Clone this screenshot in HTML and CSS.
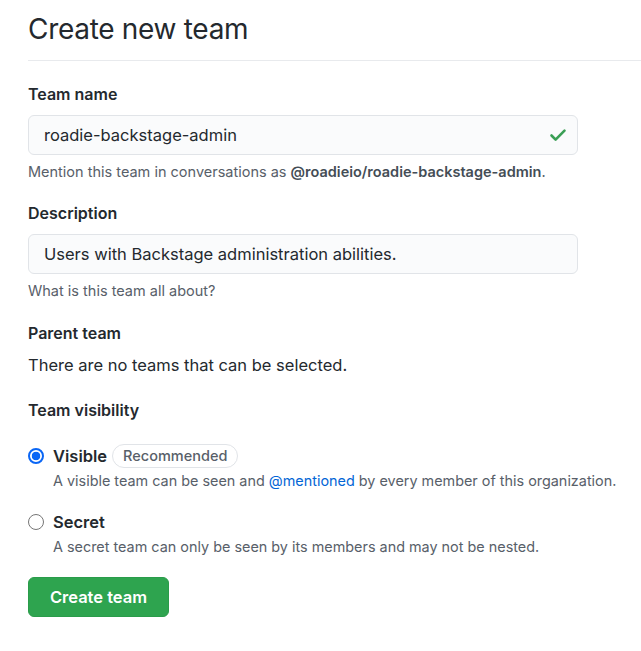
FILE: index.html
```html
<!DOCTYPE html>
<html>
<head>
<meta charset="utf-8">
<link rel="stylesheet" href="styles.css">
</head>
<body>
<div class="page">
  <h1 class="title">Create new team</h1>
  <div class="group">
    <label class="label">Team name</label>
    <div class="input has-check">
      <span class="value">roadie-backstage-admin</span>
      <svg class="check" width="20" height="20" viewBox="0 0 20 20"><path d="M3.5 10.5 L7.6 14.6 L16.5 5.7" fill="none" stroke="#3a9f55" stroke-width="2.6" stroke-linecap="round" stroke-linejoin="round"/></svg>
    </div>
    <p class="note">Mention this team in conversations as <strong>@roadieio/roadie-backstage-admin</strong>.</p>
  </div>
  <div class="group group-tight">
    <label class="label">Description</label>
    <div class="input"><span class="value">Users with Backstage administration abilities.</span></div>
    <p class="note">What is this team all about?</p>
  </div>
  <div class="group">
    <label class="label">Parent team</label>
    <p class="plain">There are no teams that can be selected.</p>
  </div>
  <div class="group">
    <label class="label">Team visibility</label>
    <div class="options">
      <div class="option">
        <span class="radio checked"></span>
        <div class="opt-body">
          <div class="opt-title">Visible <span class="badge">Recommended</span></div>
          <p class="opt-note">A visible team can be seen and <a class="link">@mentioned</a> by every member of this organization.</p>
        </div>
      </div>
      <div class="option">
        <span class="radio"></span>
        <div class="opt-body">
          <div class="opt-title">Secret</div>
          <p class="opt-note">A secret team can only be seen by its members and may not be nested.</p>
        </div>
      </div>
    </div>
  </div>
  <button class="btn">Create team</button>
</div>
</body>
</html>
```
FILE: styles.css
```css
* { box-sizing: border-box; }
body {
  margin: 0;
  background: #fff;
  font-family: Inter, "Liberation Sans", sans-serif;
  color: #24292e;
}
.page {
  padding: 11px 0 0 28px;
}
.title {
  margin: 0;
  font-size: 28px;
  font-weight: 400;
  line-height: 36px;
  padding-bottom: 13px;
  border-bottom: 1px solid #e8eaed;
  letter-spacing: -0.3px;
}
.group { margin-top: 22px; }
.group-tight { margin-top: 21px; }
.label {
  display: block;
  font-size: 16px;
  font-weight: 600;
  line-height: 22px;
  margin-bottom: 10px;
}
.input {
  width: 550px;
  height: 40px;
  background: #fafbfc;
  border: 1px solid #e1e4e8;
  border-radius: 6px;
  display: flex;
  align-items: center;
  padding: 0 15px;
  font-size: 16.5px;
}
.has-check { justify-content: space-between; padding-right: 9px; }
.note {
  margin: 7px 0 0;
  font-size: 14.5px;
  line-height: 19px;
  color: #586069;
}
.note strong { color: #444d56; font-weight: 600; }
.plain { margin: 0; font-size: 16.5px; line-height: 23px; }
.options { margin-top: 23px; display: flex; flex-direction: column; gap: 20px; }
.option { display: flex; gap: 9px; }
.radio {
  width: 16px; height: 16px;
  border: 1px solid #767676;
  border-radius: 50%;
  margin-top: 4px;
  flex: none;
  background: #fff;
}
.radio.checked {
  border: 2px solid #0a66f5;
  background: radial-gradient(circle, #0a66f5 0 4px, #fff 4.6px);
}
.opt-title {
  font-size: 16.5px; font-weight: 600; line-height: 24px;
  display: flex; align-items: center; gap: 5px;
}
.badge {
  font-size: 14.5px; font-weight: 500; color: #586069;
  border: 1px solid #e1e4e8; border-radius: 12px;
  padding: 0 10px; line-height: 22px;
}
.opt-note { margin: 3px 0 0; font-size: 14.4px; line-height: 19px; color: #586069; }
.link { color: #0366d6; }
.btn {
  margin-top: 21px;
  width: 141px; height: 40px;
  background: #2ea44f;
  border: 1px solid #2a9c4a;
  border-radius: 6px;
  color: #fff;
  font-family: inherit;
  font-size: 16.5px;
  font-weight: 600;
}
```
